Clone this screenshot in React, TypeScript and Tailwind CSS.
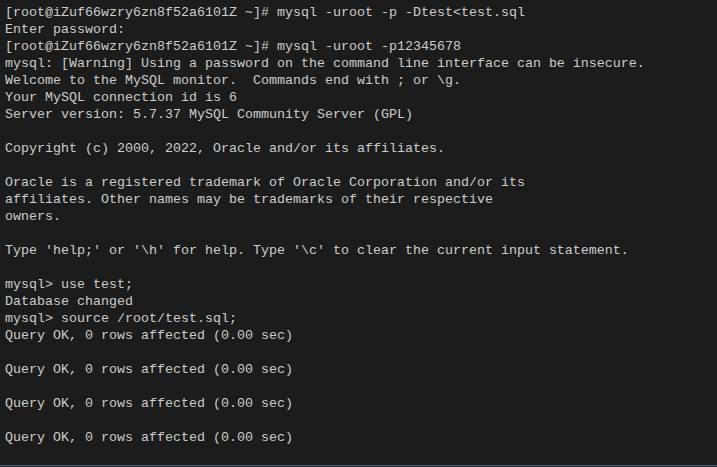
const lines = [
  '[root@iZuf66wzry6zn8f52a6101Z ~]# mysql -uroot -p -Dtest<test.sql',
  'Enter password:',
  '[root@iZuf66wzry6zn8f52a6101Z ~]# mysql -uroot -p12345678',
  'mysql: [Warning] Using a password on the command line interface can be insecure.',
  'Welcome to the MySQL monitor.  Commands end with ; or \\g.',
  'Your MySQL connection id is 6',
  'Server version: 5.7.37 MySQL Community Server (GPL)',
  '',
  'Copyright (c) 2000, 2022, Oracle and/or its affiliates.',
  '',
  'Oracle is a registered trademark of Oracle Corporation and/or its',
  'affiliates. Other names may be trademarks of their respective',
  'owners.',
  '',
  "Type 'help;' or '\\h' for help. Type '\\c' to clear the current input statement.",
  '',
  'mysql> use test;',
  'Database changed',
  'mysql> source /root/test.sql;',
  'Query OK, 0 rows affected (0.00 sec)',
  '',
  'Query OK, 0 rows affected (0.00 sec)',
  '',
  'Query OK, 0 rows affected (0.00 sec)',
  '',
  'Query OK, 0 rows affected (0.00 sec)',
]

export default function App() {
  return (
    <div className="w-[717px] h-[467px] flex flex-col bg-[#1c1c1c] overflow-hidden">
      {/* terminal output */}
      <div className="flex-1 pt-[4px] pl-[5px] font-['Liberation_Mono',monospace] text-[13.33px] leading-[17px] text-[#cccccc] whitespace-pre">
        {lines.map((line, i) => (
          <div key={i} className="h-[17px]">
            {line}
          </div>
        ))}
      </div>
      {/* bottom edge */}
      <div className="h-px bg-[#5a5a5a]" />
      <div className="h-px bg-[#1e2a36]" />
    </div>
  )
}
